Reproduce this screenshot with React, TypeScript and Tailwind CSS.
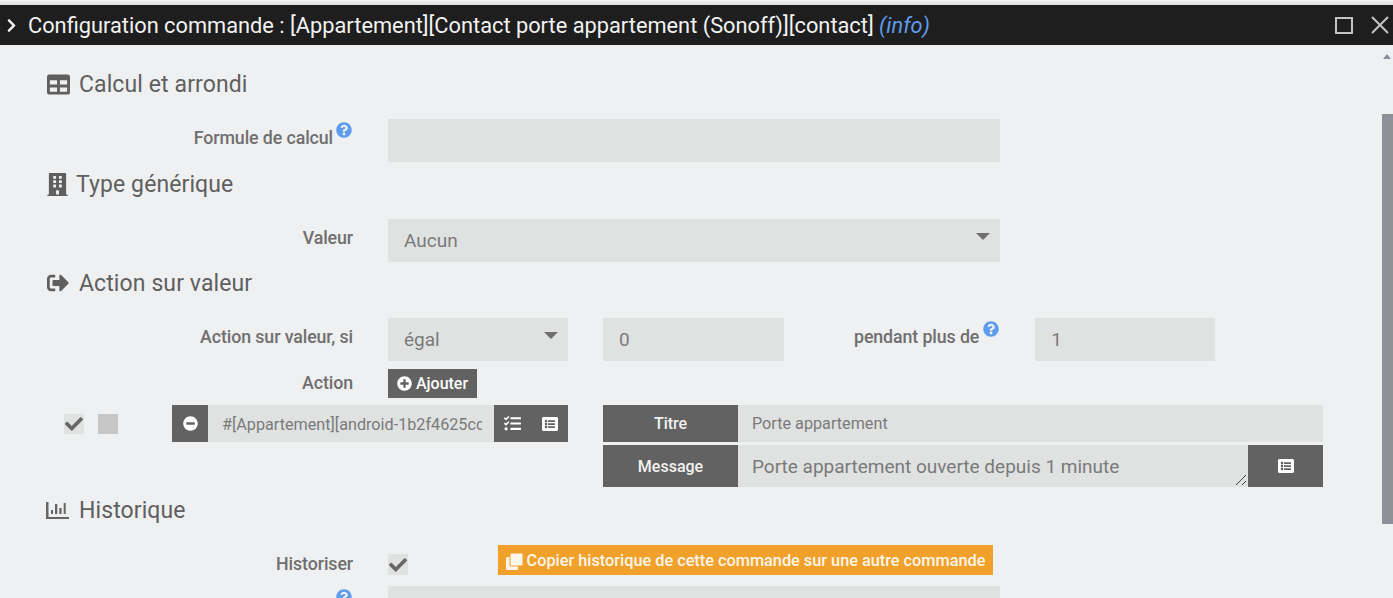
import React from 'react';
import {
    FaBuilding,
    FaCheck,
    FaChevronRight,
    FaListAlt,
    FaMinusCircle,
    FaPlusCircle,
    FaQuestionCircle,
    FaSignOutAlt,
    FaTable,
    FaTasks,
} from 'react-icons/fa';

const Heading = ({ icon, title, className }: { icon: React.ReactNode; title: string; className: string }) => (
    <div className={`flex items-center h-[30px] text-[23px] text-[#5f5f5f] tracking-[0.1px] ${className}`}>
        {icon}
        <span className="pt-[2px]">{title}</span>
    </div>
);

const Label = ({ text, help, className }: { text: string; help?: boolean; className?: string }) => (
    <div className={`w-[306px] shrink-0 flex justify-end items-center text-[17.8px] font-medium text-[#6f6f6f] tracking-[-0.1px] ${className ?? ''}`}>
        <span>{text}</span>
        {help && <FaQuestionCircle className="ml-[3px] mr-[1px] mb-[16px] text-[16px] text-[#5d9cec]" />}
    </div>
);

const Field = ({ text, className }: { text?: string; className: string }) => (
    <div className={`h-[43px] bg-[#e0e2e1] flex items-center px-4 pt-[2px] text-[19px] text-[#7a7a7a] ${className}`}>{text}</div>
);

const Caret = () => <div className="ml-auto -mr-[6px] mb-[11px] w-0 h-0 border-x-[7px] border-x-transparent border-t-[7px] border-t-[#6f6f6f]" />;

export default function App() {
    return (
        <div className="relative h-[598px] w-[1393px] overflow-hidden bg-[#eff0f2] font-['Roboto',sans-serif]">
            <div className="h-[5px] bg-gradient-to-b from-[#f6f6f6] to-[#dcdcdc]" />

            {/* Title bar */}
            <div className="h-[40px] bg-[#1e1e1e] flex items-center pl-[4px] pr-[4px] text-[#f2f2f2]">
                <FaChevronRight className="text-[15px] mr-[9px]" />
                <span className="text-[21.8px] whitespace-nowrap pt-[2px]">
                    Configuration commande : [Appartement][Contact porte appartement (Sonoff)][contact]{' '}
                    <i className="text-[#5d9cec]">(info)</i>
                </span>
                <div className="ml-auto flex items-center gap-[18px]">
                    <div className="w-[18px] h-[17px] border-2 border-[#c4c4c4]" />
                    <svg width="18" height="18" viewBox="0 0 18 18" className="stroke-[#c4c4c4]" strokeWidth="2">
                        <path d="M1 1 L17 17 M17 1 L1 17" />
                    </svg>
                </div>
            </div>

            {/* Body */}
            <div className="pl-[47px]">
                <Heading
                    className="mt-[24px]"
                    title="Calcul et arrondi"
                    icon={<FaTable className="text-[23px] mr-[9px]" />}
                />
                <div className="flex mt-[20px]">
                    <Label text="Formule de calcul" help className="mb-[5px]" />
                    <Field className="ml-[35px] w-[612px]" />
                </div>

                <Heading
                    className="mt-[7px]"
                    title="Type générique"
                    icon={<FaBuilding className="text-[23px] -ml-[1px] mr-[7px]" />}
                />
                <div className="flex mt-[20px]">
                    <Label text="Valeur" className="mb-[4px]" />
                    <div className="ml-[35px] w-[612px] h-[43px] bg-[#e0e2e1] flex items-center px-4 pt-[2px] text-[19px] text-[#7a7a7a]">
                        Aucun
                        <Caret />
                    </div>
                </div>

                <Heading
                    className="mt-[6px]"
                    title="Action sur valeur"
                    icon={<FaSignOutAlt className="text-[22px] mr-[10px]" />}
                />
                <div className="flex mt-[20px]">
                    <Label text="Action sur valeur, si" className="mb-[5px]" />
                    <div className="ml-[35px] w-[180px] h-[43px] bg-[#e0e2e1] flex items-center px-4 pt-[2px] text-[19px] text-[#7a7a7a]">
                        égal
                        <Caret />
                    </div>
                    <Field text="0" className="ml-[35px] w-[181px]" />
                    <div className="ml-[70px] mb-[5px] flex items-center text-[17.8px] font-medium text-[#6f6f6f] tracking-[-0.1px]">
                        <span>pendant plus de</span>
                        <FaQuestionCircle className="ml-[4px] mb-[16px] text-[16px] text-[#5d9cec]" />
                    </div>
                    <Field text="1" className="ml-[36px] w-[180px]" />
                </div>

                <div className="flex mt-[8px] h-[29px]">
                    <Label text="Action" />
                    <div className="ml-[35px] w-[89px] bg-[#626262] text-white flex items-center justify-center gap-[4px] text-[16px] font-medium">
                        <FaPlusCircle className="text-[15px]" />
                        Ajouter
                    </div>
                </div>

                {/* Action line */}
                <div className="flex mt-[7px]">
                    <div className="flex w-[125px] pt-[9px] pl-[17px] gap-[14px] h-fit">
                        <div className="w-[20px] h-[20px] bg-[#e0e2e1] flex items-center justify-center">
                            <FaCheck className="text-[18px] text-[#666666]" />
                        </div>
                        <div className="w-[20px] h-[20px] bg-[#c6c6c6]" />
                    </div>
                    <div className="flex w-[396px] h-[37px]">
                        <div className="w-[36px] bg-[#626262] text-white flex items-center justify-center">
                            <FaMinusCircle className="text-[15px]" />
                        </div>
                        <div className="w-[286px] bg-[#e0e2e1] pl-[14px] pr-[12px] pt-[3px] flex items-center text-[16.2px] text-[#7a7a7a]">
                            <span className="overflow-hidden whitespace-nowrap">#[Appartement][android-1b2f4625cc4b]</span>
                        </div>
                        <div className="flex-1 bg-[#626262] text-white flex items-center justify-between px-[10px]">
                            <FaTasks className="text-[17px]" />
                            <FaListAlt className="text-[16px]" />
                        </div>
                    </div>
                    <div className="ml-[35px] w-[720px] flex flex-col gap-[3px]">
                        <div className="flex h-[37px]">
                            <div className="w-[135px] bg-[#626262] text-[#f2f2f2] flex items-center justify-center text-[16px] font-medium">Titre</div>
                            <div className="flex-1 bg-[#e0e2e1] pl-[14px] pt-[2px] flex items-center text-[16.2px] text-[#7a7a7a]">Porte appartement</div>
                        </div>
                        <div className="flex h-[42px]">
                            <div className="w-[135px] bg-[#626262] text-[#f2f2f2] pt-[1px] flex items-center justify-center text-[16px] font-medium">Message</div>
                            <div className="relative flex-1 bg-[#e0e2e1] pl-[14px] pt-[2px] flex items-center text-[19px] text-[#7a7a7a]">
                                Porte appartement ouverte depuis 1 minute
                                <svg width="12" height="12" viewBox="0 0 12 12" className="absolute right-[1px] bottom-[1px] stroke-[#444444]" strokeWidth="1">
                                    <path d="M1 11 L11 1 M7 11 L11 7" />
                                </svg>
                            </div>
                            <div className="w-[75px] bg-[#626262] text-white flex items-center justify-center">
                                <FaListAlt className="text-[16px]" />
                            </div>
                        </div>
                    </div>
                </div>

                <Heading
                    className="mt-[8px]"
                    title="Historique"
                    icon={
                        <svg width="23" height="17" viewBox="0 0 23 17" className="-ml-[1px] mr-[10px] fill-[#666666]">
                            <path d="M0 0h2.5v15H23v2H0z" />
                            <path d="M5 8h2v4H5zM9 2h2.3v10H9zM13.3 6h2.3v6h-2.3zM17.7 1h2v11h-2z" />
                        </svg>
                    }
                />

                <div className="flex mt-[20px] h-[30px]">
                    <Label text="Historiser" className="mt-[8px]" />
                    <div className="ml-[35px] mt-[9px] w-[20px] h-[21px] bg-[#e0e2e1] flex items-center justify-center">
                        <FaCheck className="text-[18px] text-[#666666]" />
                    </div>
                    <div className="ml-[90px] w-[495px] pt-[2px] bg-[#f1a02a] text-[#fdf6ea] flex items-center justify-center gap-[4px] text-[16.3px] font-medium whitespace-nowrap">
                        <svg width="17" height="17" viewBox="0 0 17 17" className="shrink-0">
                            <rect x="0" y="4" width="12" height="13" rx="1" fill="#fdf6ea" />
                            <rect x="4" y="0" width="13" height="13" rx="1" fill="#fdf6ea" stroke="#f1a02a" strokeWidth="1" />
                        </svg>
                        Copier historique de cette commande sur une autre commande
                    </div>
                </div>

                <div className="flex mt-[11px]">
                    <div className="relative w-[306px] shrink-0 flex justify-end items-start pt-[3px] text-[17.8px] font-medium text-[#6f6f6f] tracking-[-0.1px]">
                        <span className="mt-[6px]">Mode de lissage</span>
                        <FaQuestionCircle className="ml-[3px] mr-[1px] text-[16px] text-[#5d9cec]" />
                    </div>
                    <Field className="ml-[35px] w-[612px]" />
                </div>
            </div>

            {/* Scrollbar */}
            <div className="absolute right-[2px] top-[54px] w-0 h-0 border-x-[4px] border-x-transparent border-b-[5px] border-b-[#8f8f97]" />
            <div className="absolute right-0 top-[114px] w-[11px] h-[410px] bg-[#8f8f97]" />
        </div>
    );
}
